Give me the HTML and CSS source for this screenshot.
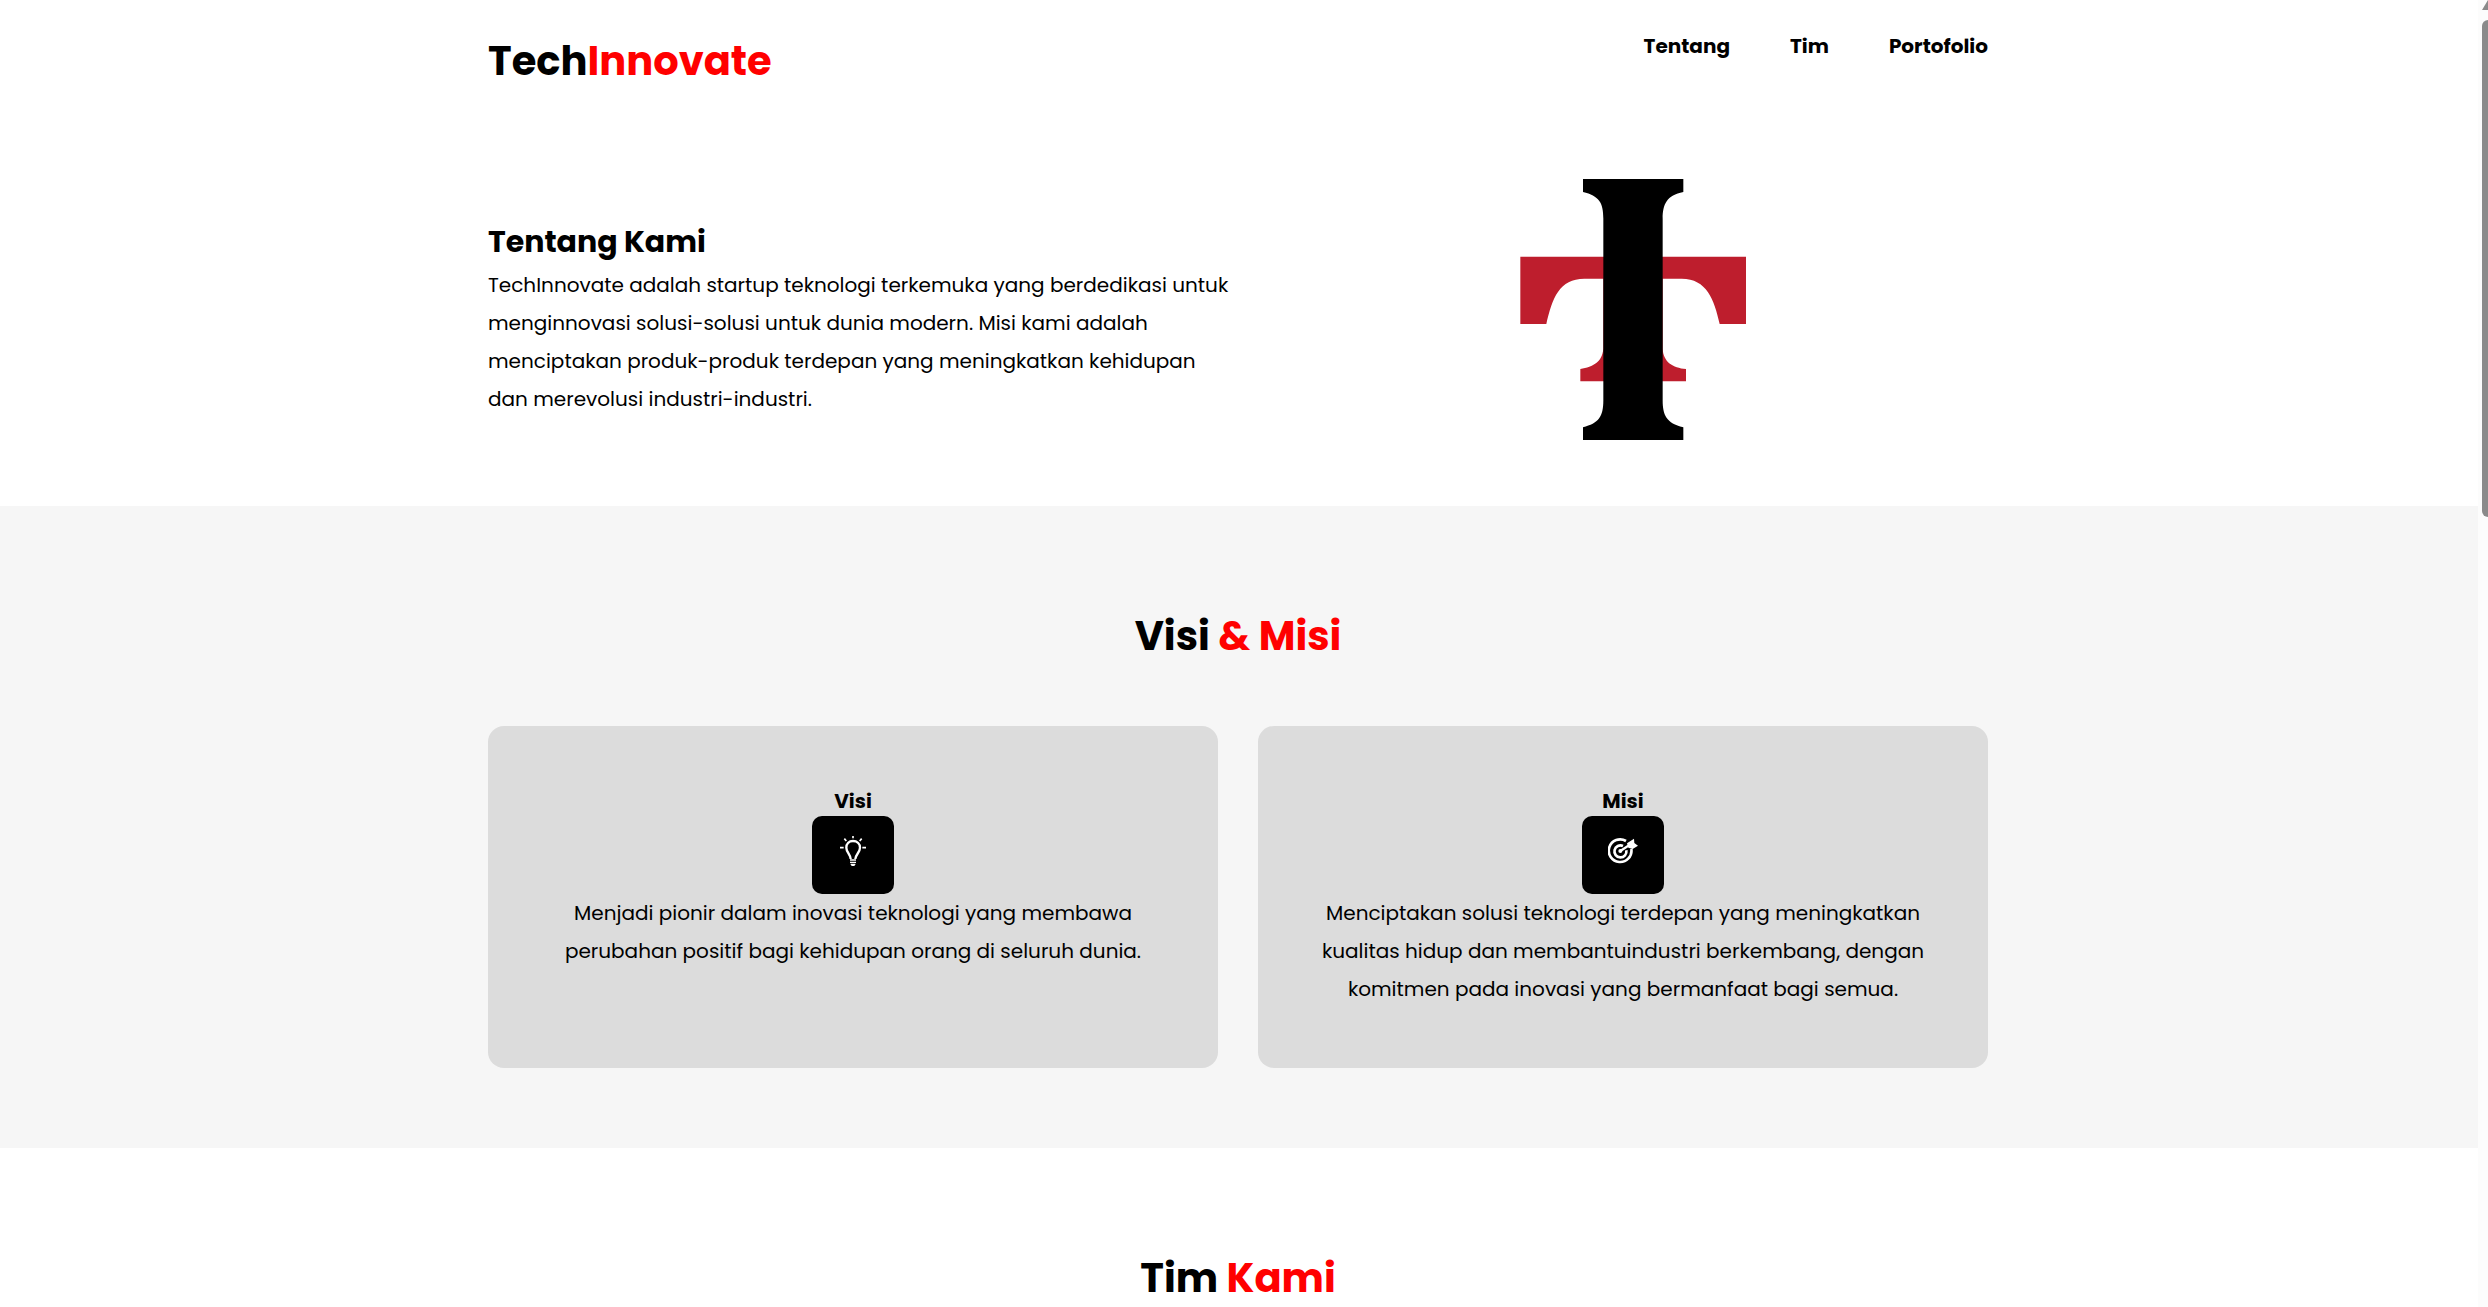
FILE: index.html
```html
<!DOCTYPE html>
<html lang="id">
<head>
<meta charset="utf-8">
<meta name="viewport" content="width=device-width, initial-scale=1">
<title>TechInnovate</title>
<link rel="stylesheet" href="styles.css">
</head>
<body>
<header class="header container">
  <h1 class="brand">Tech<span class="accent">Innovate</span></h1>
  <nav class="nav">
    <a href="#tentang">Tentang</a>
    <a href="#tim">Tim</a>
    <a href="#portofolio">Portofolio</a>
  </nav>
</header>
<main>
  <section class="hero container" id="tentang">
    <div class="hero-text">
      <h2 class="hero-title">Tentang Kami</h2>
      <p class="copy">TechInnovate adalah startup teknologi terkemuka yang berdedikasi untuk menginnovasi solusi-solusi untuk dunia modern. Misi kami adalah menciptakan produk-produk terdepan yang meningkatkan kehidupan dan merevolusi industri-industri.</p>
    </div>
    <div class="hero-art">
      <svg class="logo" viewBox="60 56 678 784" role="img" aria-label="Logo TechInnovate">
        <path fill="#be1e2d" d="M61 289H738V491H659C643 418 620 355 545 355H488V565C490 605 518 622 558 626V663H241V626C281 618 306 606 310 565V355H253C178 355 157 413 139 491H61Z"/>
        <path d="M249 56H550V95C500 105 488 132 488 175V720C488 764 499 789 550 801V840H249V801C296 789 310 770 310 720V175C310 126 297 107 249 95Z"/>
      </svg>
    </div>
  </section>
  <section class="band band-grey">
    <div class="container">
      <h2 class="heading">Visi <span class="accent">&amp; Misi</span></h2>
      <div class="cards">
        <article class="card">
          <h3 class="card-title">Visi</h3>
          <div class="badge">
            <svg class="icon" viewBox="144 168 90 90" aria-hidden="true" fill="none" stroke="#fff">
              <path stroke-width="7" d="M182 237C181 223 169 217 169 203C169 191 177 183 189 183S210 191 210 203C210 217 197 223 196 237"/>
              <path stroke-width="5" d="M189 168V175M163 176L169 183M215 176L209 183M150 203H161M217 203H228"/>
              <path stroke-width="4" d="M180 240H198M180 247H198M182 253H196M184 257H194"/>
            </svg>
          </div>
          <p class="copy">Menjadi pionir dalam inovasi teknologi yang membawa perubahan positif bagi kehidupan orang di seluruh dunia.</p>
        </article>
        <article class="card">
          <h3 class="card-title">Misi</h3>
          <div class="badge">
            <svg class="icon" viewBox="144 168 90 90" aria-hidden="true" fill="none" stroke="#fff">
              <path stroke-width="8" d="M198 183A34 34 0 1 0 214 207"/>
              <path stroke-width="8" d="M189 198A18 18 0 1 0 199 211"/>
              <path stroke-width="7" d="M180 214L207 196"/>
              <circle cx="181" cy="213" r="6" fill="#fff" stroke="none"/>
              <path fill="#fff" stroke="none" d="M201 190L222 176L223 189L234 197L218 207L205 203Z"/>
            </svg>
          </div>
          <p class="copy">Menciptakan solusi teknologi terdepan yang meningkatkan kualitas hidup dan membantuindustri berkembang, dengan komitmen pada inovasi yang bermanfaat bagi semua.</p>
        </article>
      </div>
    </div>
  </section>
  <section class="band" id="tim">
    <div class="container">
      <h2 class="heading">Tim <span class="accent">Kami</span></h2>
    </div>
  </section>
</main>
<div class="scrollbar" aria-hidden="true">
  <div class="scroll-arrow"></div>
  <div class="scroll-thumb"></div>
</div>
</body>
</html>
```
FILE: styles.css
```css
* {
  box-sizing: border-box;
  margin: 0;
  padding: 0;
}

html {
  overflow: hidden;
}

body {
  height: 100vh;
  overflow: hidden;
  padding-right: 10px;
  background: #fff;
  color: #000;
  font-family: Poppins, Inter, sans-serif;
  font-size: 20px;
}

.container {
  width: 100%;
  max-width: 1502px;
  margin: 0 auto;
  padding-right: 2px;
}

.accent {
  color: #f00;
}

.header {
  display: flex;
  justify-content: space-between;
  align-items: flex-start;
  padding-top: 30px;
  padding-bottom: 38px;
}

.brand {
  font-size: 40px;
  line-height: 62px;
}

.nav {
  display: flex;
  gap: 60px;
}

.nav a {
  color: inherit;
  font-weight: 700;
  line-height: 32px;
  text-decoration: none;
}

.hero {
  display: grid;
  grid-template-columns: 1fr 1fr;
  align-items: center;
}

.hero-art {
  display: flex;
  justify-content: center;
  padding: 49px 0 66px 40px;
}

.logo {
  width: 226px;
}

.hero-title {
  font-size: 30px;
  line-height: 48px;
}

.copy {
  line-height: 38px;
}

.band {
  padding: 80px 0;
}

.band-grey {
  background: #f6f6f6;
}

.heading {
  margin-bottom: 40px;
  font-size: 40px;
  line-height: 100px;
  text-align: center;
}

.cards {
  display: grid;
  grid-template-columns: 1fr 1fr;
  gap: 40px;
}

.card {
  display: flex;
  flex-direction: column;
  align-items: center;
  padding: 60px;
  border-radius: 16px;
  background: #dcdcdc;
  text-align: center;
}

.card-title {
  font-size: 20px;
  line-height: 30px;
}

.badge {
  padding: 20px 26px 28px;
  border-radius: 10px;
  background: #000;
}

.icon {
  display: block;
  width: 30px;
  height: 30px;
}

.scrollbar {
  position: fixed;
  top: 0;
  right: 0;
  bottom: 0;
  width: 10px;
  padding-left: 4px;
  overflow: hidden;
  background: #fcfcfc;
}

.scroll-arrow {
  width: 12px;
  height: 10px;
  background: #8a8a8a;
  clip-path: polygon(0 100%, 50% 0, 100% 100%);
}

.scroll-thumb {
  width: 12px;
  height: 38vh;
  margin-top: 10px;
  border-radius: 6px;
  background: #8a8a8a;
}
```
